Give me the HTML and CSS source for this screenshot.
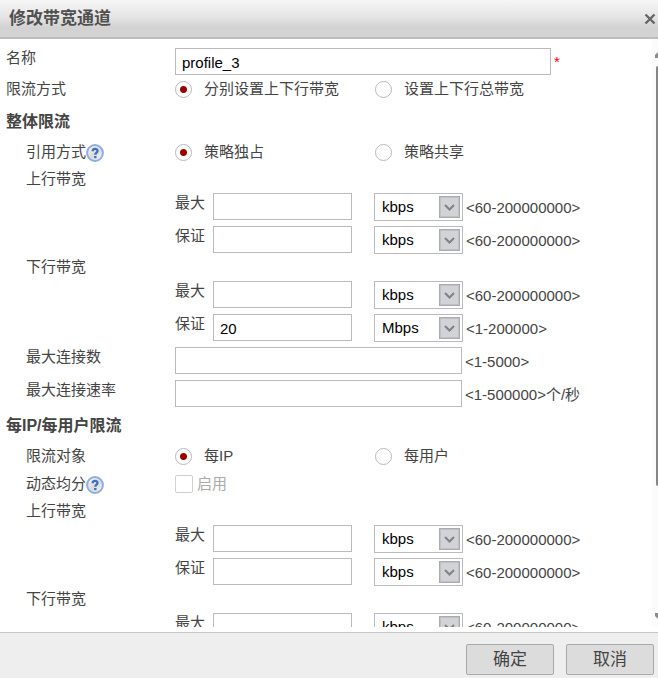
FILE: index.html
```
<!DOCTYPE html>
<html lang="zh-CN">
<head>
<meta charset="utf-8">
<title>修改带宽通道</title>
<link rel="stylesheet" href="styles.css">
</head>
<body>
<svg class="defs" aria-hidden="true">
  <defs>
    <linearGradient id="help-fill" x1="0" y1="0" x2="1" y2="1">
      <stop offset="0" stop-color="#ffffff"/>
      <stop offset="0.5" stop-color="#dadada"/>
      <stop offset="1" stop-color="#f8f8f8"/>
    </linearGradient>
    <symbol id="help" viewBox="0 0 18 18">
      <circle cx="9" cy="9" r="7.9" fill="url(#help-fill)" stroke="#8eade0" stroke-width="2"/>
      <path d="M6.600 7.200C6.600 4.200 11.500 4.200 11.500 6.900C11.500 8.600 9.300 8.600 9.300 10.800" fill="none" stroke="#3d70c4" stroke-width="2.300"/>
      <path d="M8.100 12h2.400v2.200H8.100z" fill="#3d70c4"/>
    </symbol>
    <symbol id="chevron" viewBox="0 0 21 22">
      <rect x="0.500" y="0.500" width="20" height="21" fill="#d2d3d6" stroke="#a9abb1"/>
      <rect x="1.500" y="1.500" width="18" height="19" fill="none" stroke="#bfc1c5"/>
      <path d="M6 9L10.500 13.500L15 9" fill="none" stroke="#808285" stroke-width="2"/>
    </symbol>
  </defs>
</svg>
<div class="dialog">
  <header class="title-bar">
    <h1>修改带宽通道</h1>
    <button class="close" type="button" aria-label="关闭">
      <svg viewBox="0 0 12 12"><path d="M1.500 1.500L10.500 10.500M10.500 1.500L1.500 10.500" stroke="#666" stroke-width="2.400"/></svg>
    </button>
  </header>

  <form class="content">
    <div class="row field">
      <label class="name" for="profile">名称</label>
      <input class="text wide" id="profile" type="text" value="profile_3"><span class="required">*</span>
    </div>
    <div class="row choice mode">
      <span class="name">限流方式</span>
      <label class="option"><input type="radio" name="mode" checked>分别设置上下行带宽</label>
      <label class="option"><input type="radio" name="mode">设置上下行总带宽</label>
    </div>

    <h2>整体限流</h2>
    <div class="row choice">
      <span class="name sub">引用方式<svg class="help"><use href="#help"/></svg></span>
      <label class="option"><input type="radio" name="policy" checked>策略独占</label>
      <label class="option"><input type="radio" name="policy">策略共享</label>
    </div>
    <div class="direction first">上行带宽</div>
    <div class="row field limit">
      <label class="kind" for="up-max">最大</label>
      <input class="text" id="up-max" type="text">
      <span class="unit"><select aria-label="单位"><option>kbps</option><option>Mbps</option></select><svg><use href="#chevron"/></svg></span>
      <span class="range">&lt;60-200000000&gt;</span>
    </div>
    <div class="row field limit">
      <label class="kind" for="up-min">保证</label>
      <input class="text" id="up-min" type="text">
      <span class="unit"><select aria-label="单位"><option>kbps</option><option>Mbps</option></select><svg><use href="#chevron"/></svg></span>
      <span class="range">&lt;60-200000000&gt;</span>
    </div>
    <div class="direction">下行带宽</div>
    <div class="row field limit">
      <label class="kind" for="down-max">最大</label>
      <input class="text" id="down-max" type="text">
      <span class="unit"><select aria-label="单位"><option>kbps</option><option>Mbps</option></select><svg><use href="#chevron"/></svg></span>
      <span class="range">&lt;60-200000000&gt;</span>
    </div>
    <div class="row field limit">
      <label class="kind" for="down-min">保证</label>
      <input class="text" id="down-min" type="text" value="20">
      <span class="unit"><select aria-label="单位"><option>kbps</option><option selected>Mbps</option></select><svg><use href="#chevron"/></svg></span>
      <span class="range">&lt;1-200000&gt;</span>
    </div>
    <div class="row field">
      <label class="name sub" for="connections">最大连接数</label>
      <input class="text medium" id="connections" type="text">
      <span class="range">&lt;1-5000&gt;</span>
    </div>
    <div class="row field">
      <label class="name sub" for="rate">最大连接速率</label>
      <input class="text medium" id="rate" type="text">
      <span class="range">&lt;1-500000&gt;个/秒</span>
    </div>

    <h2>每IP/每用户限流</h2>
    <div class="row choice">
      <span class="name sub">限流对象</span>
      <label class="option"><input type="radio" name="target" checked>每IP</label>
      <label class="option"><input type="radio" name="target">每用户</label>
    </div>
    <div class="row choice">
      <span class="name sub">动态均分<svg class="help"><use href="#help"/></svg></span>
      <label class="option disabled"><input type="checkbox" disabled>启用</label>
    </div>
    <div class="direction first">上行带宽</div>
    <div class="row field limit">
      <label class="kind" for="each-up-max">最大</label>
      <input class="text" id="each-up-max" type="text">
      <span class="unit"><select aria-label="单位"><option>kbps</option><option>Mbps</option></select><svg><use href="#chevron"/></svg></span>
      <span class="range">&lt;60-200000000&gt;</span>
    </div>
    <div class="row field limit">
      <label class="kind" for="each-up-min">保证</label>
      <input class="text" id="each-up-min" type="text">
      <span class="unit"><select aria-label="单位"><option>kbps</option><option>Mbps</option></select><svg><use href="#chevron"/></svg></span>
      <span class="range">&lt;60-200000000&gt;</span>
    </div>
    <div class="direction">下行带宽</div>
    <div class="row field limit">
      <label class="kind" for="each-down-max">最大</label>
      <input class="text" id="each-down-max" type="text">
      <span class="unit"><select aria-label="单位"><option>kbps</option><option>Mbps</option></select><svg><use href="#chevron"/></svg></span>
      <span class="range">&lt;60-200000000&gt;</span>
    </div>
    <div class="scrollbar" aria-hidden="true">
      <svg viewBox="0 0 6 6"><path d="M3 6V3L6 0V6z" fill="#8b8b8b"/></svg>
      <span class="thumb"></span>
      <svg viewBox="0 0 6 6"><path d="M3 0V3L6 6V0z" fill="#8b8b8b"/></svg>
    </div>
  </form>

  <footer class="actions">
    <button type="button">确定</button>
    <button type="button">取消</button>
  </footer>
</div>
</body>
</html>
```
FILE: styles.css
```
* {
  box-sizing: border-box;
}

body {
  margin: 0;
  background: #fff;
  color: #444;
  font: 15px/22px "Liberation Sans", "Noto Sans CJK SC", sans-serif;
}

input,
select,
button {
  margin: 0;
  font: inherit;
}

.defs {
  position: absolute;
  width: 0;
  height: 0;
}

.dialog {
  display: flex;
  flex-direction: column;
  height: 100vh;
}

.title-bar {
  display: flex;
  flex: none;
  align-items: center;
  justify-content: space-between;
  height: 39px;
  padding: 0 2px 0 9px;
  border-bottom: 2px solid #bdbdbd;
  background: linear-gradient(#f6f6f6, #e5e5e5 45%, #d2d2d2 75%, #d4d4d4);
}

h1 {
  margin: 0;
  font-size: 17px;
  color: #505050;
}

.close {
  display: flex;
  padding: 0;
  border: 0;
  background: none;
}

.close svg {
  width: 12px;
  height: 12px;
}

.content {
  position: relative;
  flex: 1;
  min-height: 0;
  margin-bottom: 5px;
  padding-top: 6px;
  overflow: hidden;
}

.row {
  display: flex;
}

.field {
  height: 33px;
  line-height: 26px;
}

.name {
  flex: none;
  width: 175px;
  padding-left: 6px;
}

.sub {
  padding-left: 26px;
}

.limit {
  padding-left: 175px;
}

.kind {
  width: 38px;
}

.text {
  width: 139px;
  height: 27px;
  margin-top: 3px;
  padding: 2px 6px 0;
  border: 1px solid #babac0;
  background: #fff;
  color: #000;
}

.wide {
  width: 376px;
}

.medium {
  width: 287px;
}

.required {
  padding: 4px 3px;
  color: #f00;
}

.range {
  margin: 5px 0 0 3px;
}

.unit {
  position: relative;
  height: 28px;
  margin: 3px 0 0 22px;
}

.unit select {
  display: block;
  width: 89px;
  height: 28px;
  padding: 0 24px 0 7px;
  border: 1px solid #babac0;
  border-radius: 0;
  appearance: none;
  background: #fff;
  color: #000;
}

.unit svg {
  position: absolute;
  top: 3px;
  right: 3px;
  width: 21px;
  height: 22px;
  pointer-events: none;
}

.choice {
  align-items: center;
  height: 28px;
}

.mode {
  height: 22px;
  margin-bottom: 6px;
}

.help {
  width: 18px;
  height: 18px;
  vertical-align: -5px;
}

.option {
  display: flex;
  align-items: center;
  gap: 12px;
  width: 200px;
}

.option input {
  width: 17px;
  height: 17px;
  border: 1px solid #b8b8b8;
  appearance: none;
  background: #fff;
}

.option input[type="radio"] {
  border-radius: 50%;
}

.option input[type="radio"]:checked {
  background: radial-gradient(circle, #900 3px, #fff 4px);
}

.option input[type="checkbox"] {
  width: 18px;
  height: 18px;
  border: 1px solid #d0d0d0;
  border-radius: 2px;
}

.disabled {
  gap: 4px;
  color: #aaa;
}

h2 {
  margin: 0;
  padding-left: 6px;
  font-size: 16px;
  line-height: 32px;
}

.direction {
  padding-left: 26px;
}

.first {
  margin-top: 2px;
}

.scrollbar {
  position: absolute;
  top: 0;
  right: 0;
  bottom: 0;
  display: flex;
  flex-direction: column;
  align-items: flex-end;
  width: 6px;
  padding: 13px 0 8px;
  background: #fbfbfb;
}

.scrollbar svg {
  width: 6px;
  height: 6px;
}

.thumb {
  width: 2px;
  height: 74%;
  margin: 8px 0 auto;
  border-radius: 2px 0 0 2px;
  background: #858585;
}

.actions {
  display: flex;
  flex: none;
  justify-content: flex-end;
  gap: 12px;
  height: 46px;
  padding: 11px 4px 2px 0;
  border-top: 1px solid #c8c8c8;
  background: #eee;
}

.actions button {
  width: 88px;
  height: 31px;
  padding: 0;
  border: 1px solid #a8a9ad;
  border-radius: 2px;
  background: #dcdcdc;
  color: #444;
  font-size: 17px;
}
```
